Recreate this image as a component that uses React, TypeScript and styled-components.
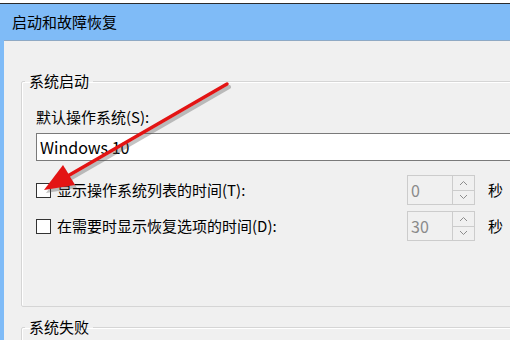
import React from 'react';
import styled, { createGlobalStyle } from 'styled-components';

const GlobalStyle = createGlobalStyle`
  html, body {
    margin: 0;
    padding: 0;
    background: #ffffff;
  }
  body {
    font-family: "Noto Sans CJK SC", "Noto Sans", sans-serif;
    color: #000;
  }
`;

const Page = styled.div`
  position: relative;
  width: 510px;
  height: 340px;
  overflow: hidden;
  padding-top: 3px;
  box-sizing: border-box;
`;

const Frame = styled.div`
  height: 337px;
  background: #7fbbf7;
  border-top: 1px solid #2b2b2b;
  display: flex;
  flex-direction: column;
`;

const TitleBar = styled.div`
  height: 36px;
  padding-left: 12px;
  display: flex;
  align-items: center;
  font-size: 15px;
  line-height: 18px;
  color: #000;
`;

const Body = styled.div`
  flex: 1;
  margin-left: 4px;
  background: #f0f0f0;
  border-top: 1px solid #8fa9c4;
  padding: 31px 0 0 17px;
  overflow: hidden;
`;

const Group = styled.fieldset<{ $gap?: number }>`
  width: 520px;
  margin: ${p => p.$gap ?? 0}px 0 0 0;
  padding: 17px 0 65px 14px;
  border: 1px solid #d5d5d5;
  box-shadow: inset 1px 1px 0 #ffffff;
  border-radius: 2px;
  box-sizing: border-box;
`;

const Legend = styled.legend`
  margin-left: -11px;
  padding: 0 4px;
  font-size: 15px;
  line-height: 18px;
  color: #000;
`;

const FieldLabel = styled.div`
  font-size: 15px;
  line-height: 20px;
`;

const TextBox = styled.div`
  margin-top: 6px;
  height: 26px;
  border: 1px solid #7a7a7a;
  border-right: none;
  background: #ffffff;
  display: flex;
  align-items: center;
  padding-left: 3px;
  font-size: 16px;
  color: #000;
`;

const Rows = styled.div`
  margin-top: 14px;
  display: flex;
  flex-direction: column;
  gap: 6px;
`;

const Row = styled.div`
  height: 30px;
  display: flex;
  align-items: center;
`;

const CheckLabel = styled.label`
  width: 371px;
  display: flex;
  align-items: center;
  gap: 6px;
  font-size: 15px;
  line-height: 20px;
`;

const Box = styled.span`
  width: 13px;
  height: 13px;
  border: 1px solid #333333;
  background: #ffffff;
  flex-shrink: 0;
`;

const Spinner = styled.div`
  width: 68px;
  height: 30px;
  box-sizing: border-box;
  border: 1px solid #cccccc;
  background: #f0f0f0;
  display: flex;
`;

const SpinValue = styled.div`
  flex: 1;
  display: flex;
  align-items: center;
  padding-left: 3px;
  font-size: 16px;
  color: #8a8a8a;
`;

const SpinButtons = styled.div`
  width: 21px;
  border-left: 1px solid #cccccc;
  display: flex;
  flex-direction: column;
`;

const SpinButton = styled.div<{ $top?: boolean }>`
  flex: 1;
  display: flex;
  align-items: center;
  justify-content: center;
  border-top: ${p => (p.$top ? 'none' : '1px solid #cccccc')};
`;

const Unit = styled.span`
  margin-left: 13px;
  font-size: 15px;
  line-height: 20px;
`;

const Overlay = styled.svg`
  position: absolute;
  left: 0;
  top: 0;
  pointer-events: none;
`;

const Chevron = ({ up }: { up?: boolean }) => (
  <svg width="9" height="6" viewBox="0 0 9 6">
    <polyline
      points={up ? '1,5 4.5,1.5 8,5' : '1,1 4.5,4.5 8,1'}
      fill="none"
      stroke="#8c8c8c"
      strokeWidth="1"
    />
  </svg>
);

const SpinBox = ({ value }: { value: string }) => (
  <Spinner>
    <SpinValue>{value}</SpinValue>
    <SpinButtons>
      <SpinButton $top>
        <Chevron up />
      </SpinButton>
      <SpinButton>
        <Chevron />
      </SpinButton>
    </SpinButtons>
  </Spinner>
);

const rows = [
  { label: '显示操作系统列表的时间(T):', value: '0' },
  { label: '在需要时显示恢复选项的时间(D):', value: '30' },
];

const App = () => (
  <Page>
    <GlobalStyle />
    <Frame>
      <TitleBar>启动和故障恢复</TitleBar>
      <Body>
        <Group>
          <Legend>系统启动</Legend>
          <FieldLabel>默认操作系统(S):</FieldLabel>
          <TextBox>Windows 10</TextBox>
          <Rows>
            {rows.map(r => (
              <Row key={r.label}>
                <CheckLabel>
                  <Box />
                  {r.label}
                </CheckLabel>
                <SpinBox value={r.value} />
                <Unit>秒</Unit>
              </Row>
            ))}
          </Rows>
        </Group>
        <Group $gap={11}>
          <Legend>系统失败</Legend>
        </Group>
      </Body>
    </Frame>
    <Overlay width="510" height="340" viewBox="0 0 510 340">
      <g opacity="0.35" transform="translate(2,3)">
        <line x1="227" y1="84" x2="66" y2="177" stroke="#555" strokeWidth="4" strokeLinecap="round" />
        <polygon points="44,190 63,165 75,185" fill="#555" />
      </g>
      <line x1="227" y1="84" x2="66" y2="177" stroke="#e31414" strokeWidth="3.5" strokeLinecap="round" />
      <polygon points="44,190 63,165 75,185" fill="#e31414" />
    </Overlay>
  </Page>
);

export default App;
